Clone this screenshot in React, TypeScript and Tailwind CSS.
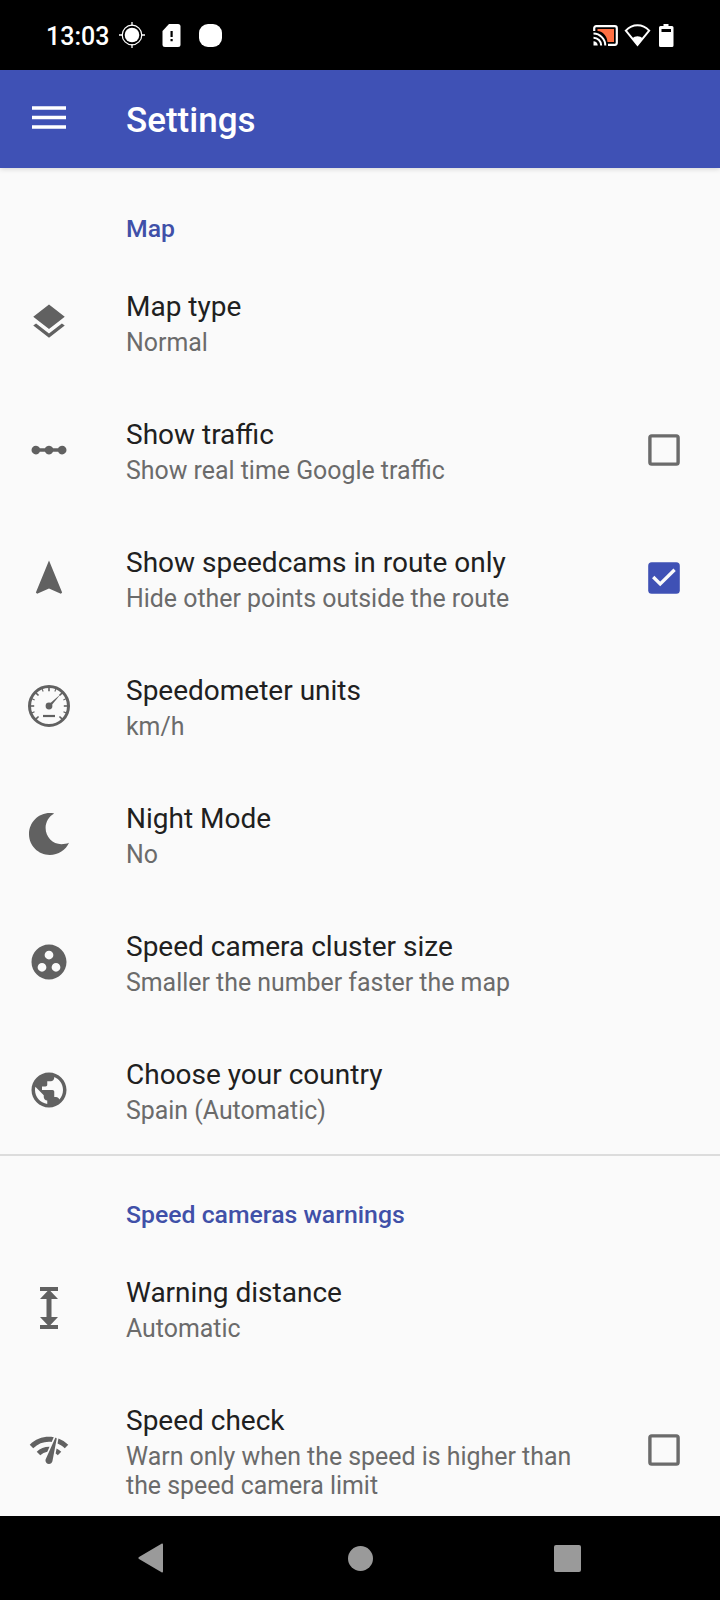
import { useState, type ReactNode } from "react";
import {
  MdGroupWork,
  MdLayers,
  MdLinearScale,
  MdNavigation,
  MdNetworkCheck,
  MdPublic,
} from "react-icons/md";

// speedometer ticks, in degrees from the top
const ticks = [-135, -112, -90, -67, -45, -22, 0, 22, 45, 67, 90, 112, 135];

function SpeedometerIcon() {
  return (
    <svg width="42" height="42" viewBox="0 0 42 42" fill="none" stroke="currentColor">
      <circle cx="21" cy="21" r="19.5" strokeWidth="3" />
      {ticks.map((deg, i) => (
        <path
          key={deg}
          d={i % 2 === 0 ? "M21 2v4.2" : "M21 2v3.4"}
          strokeWidth={i % 2 === 0 ? 1.6 : 1.1}
          transform={`rotate(${deg} 21 21)`}
        />
      ))}
      <circle cx="21" cy="21" r="3.4" fill="currentColor" stroke="none" />
      <path d="M20 20 32.4 9.4 22.2 22z" fill="currentColor" stroke="none" />
      <path d="M15 31h12" strokeWidth="2.2" />
    </svg>
  );
}

function MoonIcon() {
  return (
    <svg width="42" height="42" viewBox="0 0 42 42" fill="currentColor">
      <path d="M26.2.4C21 3.2 17.6 9 17.6 15c0 9 7.1 16.2 15.8 16.2 2.8 0 5.2-.4 7.6-1.4C37.9 37 30.3 42 21.8 42 10.2 42 1 32.7 1 21.1 1 9.5 10.3 0 21.8 0c1.5 0 3 .1 4.4.4z" />
    </svg>
  );
}

function DistanceIcon() {
  return (
    <svg width="42" height="42" viewBox="0 0 42 42" fill="currentColor">
      <path d="M12 0h18v4H12zM12 38h18v4H12z" />
      <path d="M21 2.5 30 12h-6.500v18H30l-9 9.500L12 30h6.500V12H12z" />
    </svg>
  );
}

function StatusBar() {
  return (
    <header className="flex h-[70px] items-center bg-black px-[46px] text-white">
      <span className="mt-[2px] w-[65px] text-[25px] leading-none font-medium">13:03</span>
      <svg className="ml-2" width="26" height="26" viewBox="0 0 26 26" fill="none" stroke="currentColor">
        <circle cx="13" cy="13" r="7.3" fill="currentColor" stroke="none" />
        <circle cx="13" cy="13" r="9.8" strokeWidth="1.2" />
        <path d="M13 0v4M13 22v4M0 13h4M22 13h4" strokeWidth="1.3" />
      </svg>
      <svg className="ml-[17px]" width="19" height="23" viewBox="0 0 19 23">
        <path d="M7 0h9a2.5 2.5 0 0 1 2.5 2.5v18A2.5 2.5 0 0 1 16 23H3A2.5 2.5 0 0 1 .5 20.500V7z" fill="#fff" />
        <path d="M8.500 7h2.200v6H8.500zM8.500 15h2.200v2.200H8.500z" fill="#000" />
      </svg>
      <span className="ml-[18px] size-[23px] rounded-[9px] bg-white" />
      <div className="ml-auto flex items-center">
        <svg width="25" height="21" viewBox="0 0 25 21" fill="none">
          <path d="M1.200 6V3.200a2 2 0 0 1 2-2h18.600a2 2 0 0 1 2 2v14.600a2 2 0 0 1-2 2H15" stroke="#fff" strokeWidth="2.2" />
          <path d="M4.500 4h16.500v13H14.500C14 11 10 6.500 4.500 6z" fill="#ff7043" />
          <path d="M.5 8.500A12 12 0 0 1 12.300 20.500M.5 12.700A7.800 7.800 0 0 1 8.200 20.500" stroke="#fff" strokeWidth="2" />
          <path d="M.5 16.300A4.200 4.200 0 0 1 4.700 20.500H.5z" fill="#fff" />
        </svg>
        <svg className="ml-[6px]" width="27" height="23" viewBox="0 0 27 23">
          <path d="M1.800 6.600C8.500-.4 18.500-.4 25.200 6.600L13.500 21z" fill="none" stroke="#fff" strokeWidth="2" />
          <path d="M8.300 14.500C11 11.500 16 11.500 18.700 14.500L13.500 21.500z" fill="#fff" />
        </svg>
        <svg className="ml-[8px]" width="15" height="23" viewBox="0 0 15 23">
          <path d="M4.500 0h5v2H13a1.500 1.500 0 0 1 1.500 1.500v18A1.500 1.500 0 0 1 13 23H1.500A1.500 1.500 0 0 1 0 21.500v-18A1.500 1.500 0 0 1 1.500 2h3z" fill="#fff" />
          <path d="M2.500 5h9.500v3H2.500z" fill="#000" />
        </svg>
      </div>
    </header>
  );
}

function Checkbox({ checked, onChange }: { checked: boolean; onChange: () => void }) {
  return (
    <button
      role="checkbox"
      aria-checked={checked}
      onClick={onChange}
      className="mr-10 ml-auto size-8 shrink-0 self-center"
    >
      <svg width="32" height="32" viewBox="0 0 32 32" fill="none">
        {checked ? (
          <>
            <rect x=".2" y=".2" width="31.6" height="31.6" rx="3.5" fill="#3f51b5" />
            <path d="m5.2 15 7 6.900L26.600 7.800" stroke="#fafafa" strokeWidth="3.3" />
          </>
        ) : (
          <rect x="1.9" y="1.9" width="28.2" height="28.2" rx="1.8" stroke="#6b6b6b" strokeWidth="3.4" />
        )}
      </svg>
    </button>
  );
}

function Category({ children }: { children: ReactNode }) {
  return (
    <h2 className="flex h-[88px] items-end pb-[15px] pl-[126px] text-[24.8px] leading-[29px] font-medium text-[#4050a8]">
      {children}
    </h2>
  );
}

type PreferenceProps = {
  icon: ReactNode;
  title: string;
  summary: string;
  defaultChecked?: boolean;
};

function Preference({ icon, title, summary, defaultChecked }: PreferenceProps) {
  const [checked, setChecked] = useState(defaultChecked);

  return (
    <li className="flex pt-7 pb-[29px]">
      <div className="flex w-[98px] shrink-0 items-center justify-center text-[#616161]">{icon}</div>
      <div className="ml-7 max-w-[460px]">
        <div className="text-[28px] leading-[42px] text-[#202020]">{title}</div>
        <div className="text-[24.9px] leading-[29px] text-[#6b6b6b]">{summary}</div>
      </div>
      {checked !== undefined && <Checkbox checked={checked} onChange={() => setChecked(!checked)} />}
    </li>
  );
}

export default function App() {
  return (
    <div className="flex h-[1600px] w-[720px] flex-col overflow-hidden bg-[#fafafa] font-['Roboto',sans-serif]">
      <StatusBar />
      <div className="z-10 flex h-[98px] shrink-0 items-center bg-[#3f51b5] text-white shadow-[0_1px_5px_rgba(0,0,0,0.16)]">
        <button className="mb-[3px] ml-8">
          <svg width="34" height="23" viewBox="0 0 34 23" fill="none" stroke="currentColor" strokeWidth="3.5">
            <path d="M0 1.9h34M0 11.400h34M0 20.900h34" />
          </svg>
        </button>
        <h1 className="mt-1 ml-[60px] text-[35px] leading-[42px] font-medium">Settings</h1>
      </div>

      <main className="h-[1348px] overflow-hidden pt-[2px]">
        <Category>Map</Category>
        <ul>
          <Preference icon={<MdLayers size={42} />} title="Map type" summary="Normal" />
          <Preference
            icon={<MdLinearScale size={42} />}
            title="Show traffic"
            summary="Show real time Google traffic"
            defaultChecked={false}
          />
          <Preference
            icon={<MdNavigation size={42} />}
            title="Show speedcams in route only"
            summary="Hide other points outside the route"
            defaultChecked={true}
          />
          <Preference icon={<SpeedometerIcon />} title="Speedometer units" summary="km/h" />
          <Preference icon={<MoonIcon />} title="Night Mode" summary="No" />
          <Preference
            icon={<MdGroupWork size={42} />}
            title="Speed camera cluster size"
            summary="Smaller the number faster the map"
          />
          <Preference icon={<MdPublic size={42} />} title="Choose your country" summary="Spain (Automatic)" />
        </ul>
        <hr className="border-t-2 border-[#dcdcdc]" />
        <Category>Speed cameras warnings</Category>
        <ul>
          <Preference icon={<DistanceIcon />} title="Warning distance" summary="Automatic" />
          <Preference
            icon={<MdNetworkCheck size={42} />}
            title="Speed check"
            summary="Warn only when the speed is higher than the speed camera limit"
            defaultChecked={false}
          />
        </ul>
      </main>

      <nav className="flex h-[84px] shrink-0 items-center bg-black text-[#9a9a9a]">
        <svg className="ml-[138px]" width="26" height="30" viewBox="0 0 26 30" fill="currentColor">
          <path d="M23.500.7C24.300.2 25 .5 25 1.500v27c0 1-.7 1.300-1.500.8L1 16c-.8-.5-.8-1.500 0-2z" />
        </svg>
        <span className="ml-[184px] size-[25px] rounded-full bg-[#9a9a9a]" />
        <span className="ml-[181px] size-[27px] rounded-[2px] bg-[#9a9a9a]" />
      </nav>
    </div>
  );
}
